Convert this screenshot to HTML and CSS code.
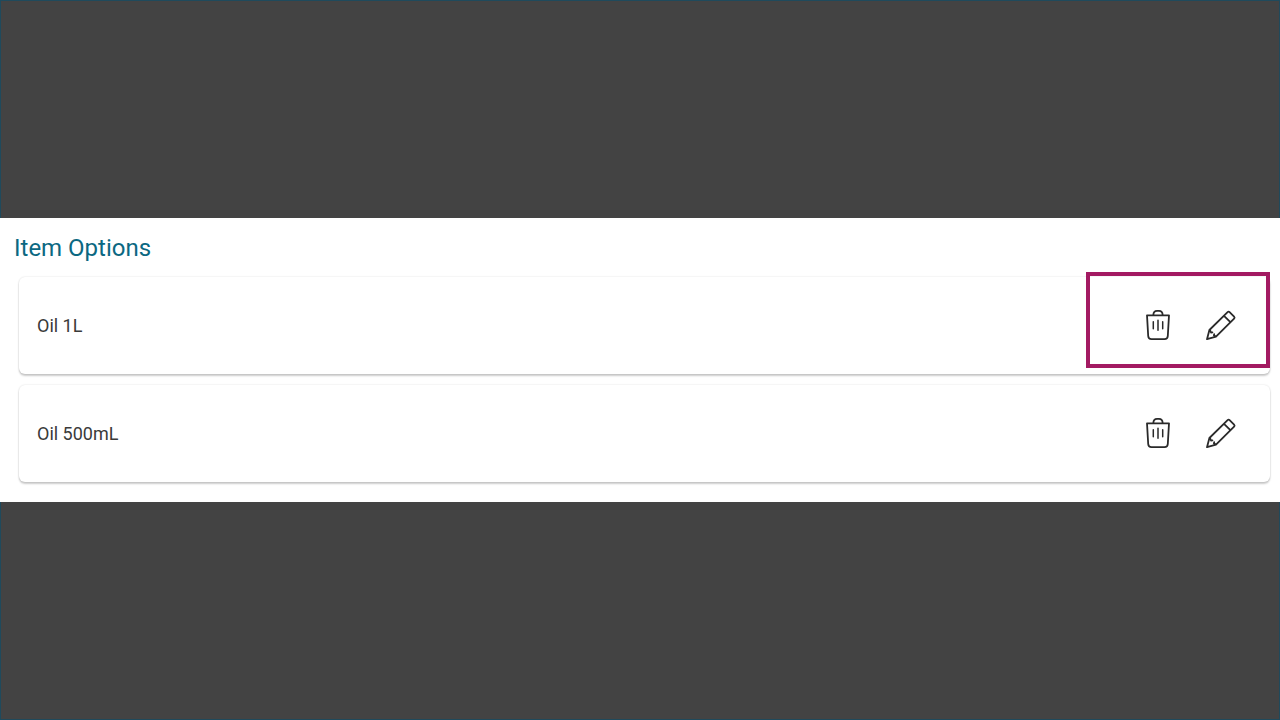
FILE: index.html
```html
<!DOCTYPE html>
<html lang="en">
<head>
  <meta charset="UTF-8" />
  <meta name="viewport" content="width=device-width, initial-scale=1.0" />
  <title>Item Options</title>
  <link rel="stylesheet" href="styles.css">
</head>
<body>
  <!-- Shared icons -->
  <svg class="sprite" aria-hidden="true">
    <symbol id="icon-trash" viewBox="0 0 32 32">
      <path d="M5 6.3h22L25.8 27q-.2 3.1-3.3 3.1H9.5q-3.1 0-3.3-3.1zM11.3 6Q11.6 1.9 15 1.9h2q3.4 0 3.7 4.1" />
      <path class="thin" d="M11.3 12.8v7M16 11.3v10M20.7 12.8v7" />
    </symbol>
    <symbol id="icon-pencil" viewBox="0 0 32 32">
      <path d="M2 30.2l2.4-9.2L22.6 3.1q1-1 2 0l4.5 4.5q1 1 0 2L11 27.6zM19 6.8l6.4 6.4M5 21l1 2.5 1.4-.2M9.2 25.2l-.3 1.2 2.1 1.2" />
    </symbol>
  </svg>

  <div class="backdrop top"></div>

  <main class="panel">
    <h1>Item Options</h1>
    <ul class="options">
      <li class="option">
        <span class="name">Oil 1L</span>
        <button type="button" aria-label="Delete Oil 1L"><svg><use href="#icon-trash" /></svg></button>
        <button type="button" aria-label="Edit Oil 1L"><svg><use href="#icon-pencil" /></svg></button>
        <div class="highlight"></div>
      </li>
      <li class="option">
        <span class="name">Oil 500mL</span>
        <button type="button" aria-label="Delete Oil 500mL"><svg><use href="#icon-trash" /></svg></button>
        <button type="button" aria-label="Edit Oil 500mL"><svg><use href="#icon-pencil" /></svg></button>
      </li>
    </ul>
  </main>

  <div class="backdrop bottom"></div>
</body>
</html>
```
FILE: styles.css
```css
* {
  box-sizing: border-box;
}
body {
  margin: 0;
  min-height: 100vh;
  display: flex;
  flex-direction: column;
  font-family: Roboto, sans-serif;
  color: #3a3a3a;
  background-color: #fff;
}
.sprite {
  display: none;
}
.backdrop {
  flex: 1;
  background-color: #434343;
  border: 1px solid #1f4a5c;
}
.backdrop.top {
  border-bottom: none;
}
.backdrop.bottom {
  border-top: none;
}
.panel {
  padding: 14px 10px 20px 14px;
}
h1 {
  margin: 0 0 13px;
  font-size: 24px;
  font-weight: 400;
  line-height: 32px;
  color: #0b6882;
}
.options {
  list-style: none;
  margin: 0 0 0 5px;
  padding: 0;
  display: flex;
  flex-direction: column;
  gap: 11px;
}
.option {
  position: relative;
  display: flex;
  align-items: center;
  gap: 31px;
  min-height: 97px;
  padding: 0 33px 0 18px;
  border-radius: 6px;
  background-color: #fff;
  box-shadow: 0 2px 2px rgba(0,0,0,0.2), 0 0 2px rgba(0,0,0,0.14);
}
.name {
  flex: 1;
  font-size: 18px;
  line-height: 24px;
}
button {
  display: flex;
  padding: 0 0 2px;
  border: none;
  background: none;
  color: #2a2a2a;
  cursor: pointer;
}
button svg {
  width: 32px;
  height: 32px;
  fill: none;
  stroke: currentColor;
  stroke-width: 1.8;
  stroke-linejoin: round;
  stroke-linecap: round;
}
.thin {
  stroke-width: 1.5;
}
/* frame drawn over the row's action buttons */
.highlight {
  position: absolute;
  top: -5px;
  right: 0;
  width: 184px;
  height: 96px;
  border: 4px solid #a31a62;
  pointer-events: none;
}
```
